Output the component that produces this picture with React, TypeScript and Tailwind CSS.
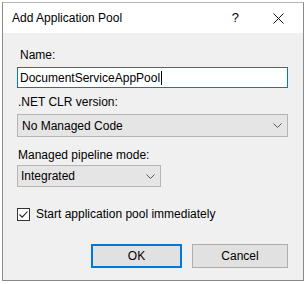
const Chevron = () => (
  <svg width="9" height="5" viewBox="0 0 9 5" className="block">
    <path d="M0.5 0.5 L4.5 4.5 L8.5 0.5" fill="none" stroke="#555" strokeWidth="1" />
  </svg>
);

export default function App() {
  return (
    <div className="w-[306px] h-[284px] bg-white pt-[2px] pl-[2px] text-[12px] text-black" style={{ fontFamily: '"Liberation Sans", Arial, sans-serif' }}>
      <div className="w-[302px] h-[279px] border border-[#8a8a8a] border-t-[#b5b5b5] bg-[#f0f0f0] flex flex-col">
        {/* title bar */}
        <div className="h-[30px] bg-white flex items-center pl-[9px] shrink-0">
          <span className="leading-4">Add Application Pool</span>
          <span className="ml-auto leading-4 text-[13px] mr-[34px]">?</span>
          <svg width="11" height="11" viewBox="0 0 11 11" className="mr-[19px]">
            <path d="M0.5 0.5 L10.5 10.5 M10.5 0.5 L0.5 10.5" stroke="#111" strokeWidth="1" />
          </svg>
        </div>

        <div className="flex flex-col pl-[14px] pr-[15px]">
          <label className="mt-[14px] leading-4 pl-[3px]">Name:</label>
          <div className="mt-[4px] h-[21px] bg-white border border-[#0078d7] flex items-center pl-[2px]">
            <span className="leading-4">DocumentServiceAppPool</span>
            <span className="w-px h-[14px] bg-black ml-[1px]" />
          </div>

          <label className="mt-[6px] leading-4 pl-[1px]">.NET CLR version:</label>
          <div className="mt-[4px] h-[23px] bg-[#e5e5e5] border border-[#b5b5b5] flex items-center pl-[4px] pr-[5px]">
            <span className="leading-4">No Managed Code</span>
            <span className="ml-auto"><Chevron /></span>
          </div>

          <label className="mt-[10px] leading-4 pl-[1px]">Managed pipeline mode:</label>
          <div className="mt-[2px] w-[144px] h-[22px] bg-[#e5e5e5] border border-[#b5b5b5] flex items-center pl-[3px] pr-[5px]">
            <span className="leading-4">Integrated</span>
            <span className="ml-auto"><Chevron /></span>
          </div>

          <div className="mt-[19px] flex items-center">
            <div className="w-[13px] h-[13px] border border-[#333] bg-white flex items-center justify-center">
              <svg width="11" height="11" viewBox="0 0 11 11">
                <path d="M1.5 5.5 L4.2 8.2 L9.5 2.5" fill="none" stroke="#222" strokeWidth="1.1" />
              </svg>
            </div>
            <span className="ml-[6px] leading-4">Start application pool immediately</span>
          </div>

          <div className="mt-[22px] flex justify-end gap-[10px]">
            <button className="w-[91px] h-[24px] bg-[#e1e1e1] border-2 border-[#0078d7] leading-4">OK</button>
            <button className="w-[96px] h-[24px] bg-[#e1e1e1] border border-[#adadad] leading-4">Cancel</button>
          </div>
        </div>
      </div>
    </div>
  );
}
